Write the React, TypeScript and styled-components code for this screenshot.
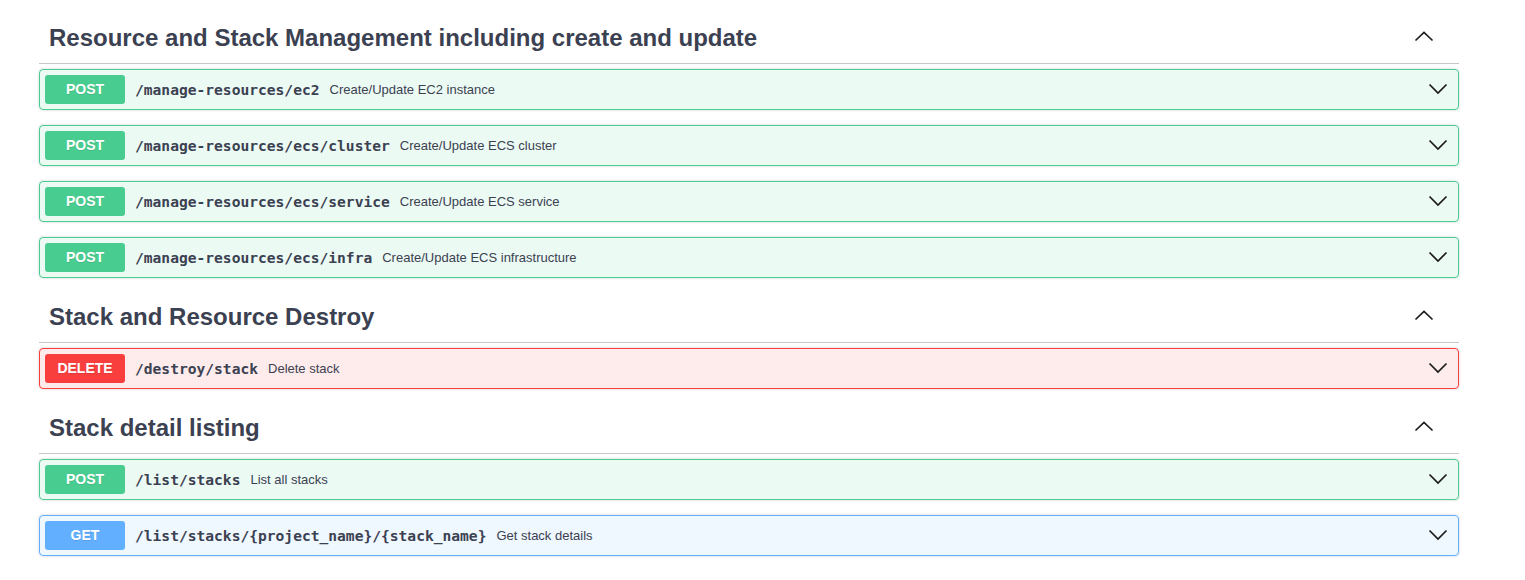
import React from "react";
import styled, { createGlobalStyle } from "styled-components";

const GlobalStyle = createGlobalStyle`
  html, body {
    margin: 0;
    padding: 0;
    background: #fff;
    font-family: "Liberation Sans", Arial, sans-serif;
    color: #3b4151;
  }
`;

type Method = "post" | "delete" | "get";

const COLORS: Record<Method, { main: string; bg: string }> = {
  post: { main: "#49cc90", bg: "rgba(73, 204, 144, 0.1)" },
  delete: { main: "#f93e3e", bg: "rgba(249, 62, 62, 0.1)" },
  get: { main: "#61affe", bg: "rgba(97, 175, 254, 0.1)" },
};

const Wrapper = styled.div`
  width: 1420px;
  padding: 14px 0 0 39px;
`;

const Section = styled.section`
  margin-bottom: 15px;
`;

const Tag = styled.div`
  display: flex;
  align-items: center;
  box-sizing: border-box;
  height: 50px;
  padding: 0 20px 2px 10px;
  margin-bottom: 5px;
  border-bottom: 1px solid rgba(59, 65, 81, 0.3);
`;

const TagTitle = styled.h3`
  flex: 1;
  margin: 0;
  font-size: 24px;
  font-weight: bold;
  color: #3b4151;
`;

const Op = styled.div<{ $method: Method }>`
  display: flex;
  align-items: center;
  padding: 5px;
  margin-bottom: 15px;
  border: 1px solid ${(p) => COLORS[p.$method].main};
  border-radius: 4px;
  background: ${(p) => COLORS[p.$method].bg};
  box-shadow: 0 0 3px rgba(0, 0, 0, 0.19);
`;

const Badge = styled.span<{ $method: Method }>`
  min-width: 80px;
  padding: 6px 0;
  line-height: 17px;
  border-radius: 3px;
  background: ${(p) => COLORS[p.$method].main};
  color: #fff;
  font-size: 14px;
  font-weight: bold;
  text-align: center;
  text-shadow: 0 1px 0 rgba(0, 0, 0, 0.1);
`;

const Path = styled.span`
  padding: 0 10px;
  font-family: "DejaVu Sans Mono", monospace;
  font-size: 14.6px;
  font-weight: 600;
  color: #3b4151;
`;

const Description = styled.span`
  flex: 1;
  font-size: 13px;
  color: #3b4151;
`;

const Arrow = styled.svg`
  width: 20px;
  height: 20px;
  margin-right: 5px;
  fill: none;
  stroke: #1b1b1b;
  stroke-width: 1.7;
`;

const Chevron = ({ up }: { up?: boolean }) => (
  <Arrow viewBox="0 0 20 20">
    <path d={up ? "M1.5 12.5 L10 4.5 L18.5 12.5" : "M1.5 4.5 L10 13 L18.5 4.5"} />
  </Arrow>
);

const sections: {
  title: string;
  ops: { method: Method; path: string; desc: string }[];
}[] = [
  {
    title: "Resource and Stack Management including create and update",
    ops: [
      { method: "post", path: "/manage-resources/ec2", desc: "Create/Update EC2 instance" },
      { method: "post", path: "/manage-resources/ecs/cluster", desc: "Create/Update ECS cluster" },
      { method: "post", path: "/manage-resources/ecs/service", desc: "Create/Update ECS service" },
      { method: "post", path: "/manage-resources/ecs/infra", desc: "Create/Update ECS infrastructure" },
    ],
  },
  {
    title: "Stack and Resource Destroy",
    ops: [{ method: "delete", path: "/destroy/stack", desc: "Delete stack" }],
  },
  {
    title: "Stack detail listing",
    ops: [
      { method: "post", path: "/list/stacks", desc: "List all stacks" },
      {
        method: "get",
        path: "/list/stacks/{project_name}/{stack_name}",
        desc: "Get stack details",
      },
    ],
  },
];

export default function App(): JSX.Element {
  return (
    <>
      <GlobalStyle />
      <Wrapper>
        {sections.map((section) => (
          <Section key={section.title}>
            <Tag>
              <TagTitle>{section.title}</TagTitle>
              <Chevron up />
            </Tag>
            {section.ops.map((op) => (
              <Op key={op.path} $method={op.method}>
                <Badge $method={op.method}>{op.method.toUpperCase()}</Badge>
                <Path>{op.path}</Path>
                <Description>{op.desc}</Description>
                <Chevron />
              </Op>
            ))}
          </Section>
        ))}
      </Wrapper>
    </>
  );
}
